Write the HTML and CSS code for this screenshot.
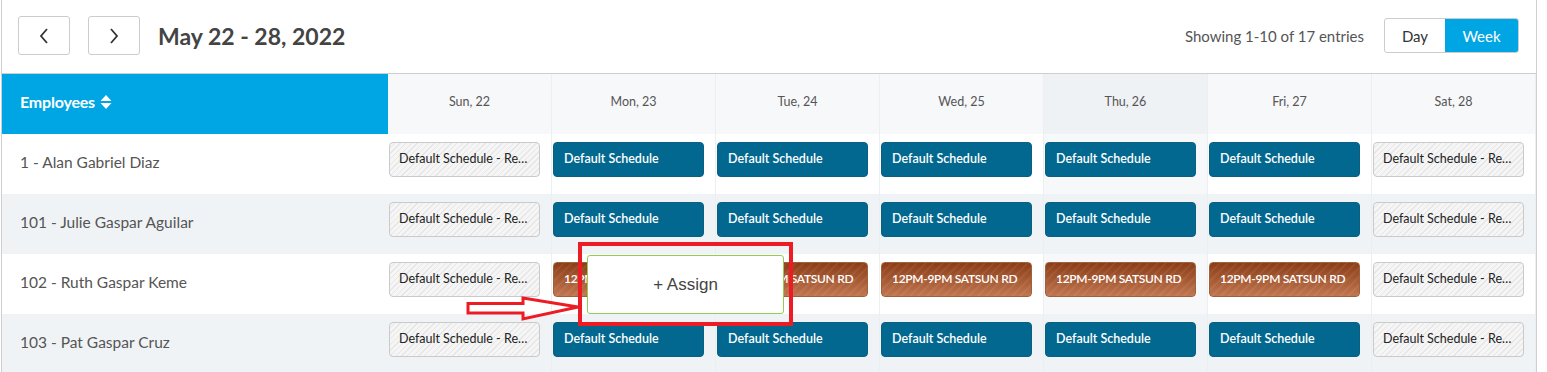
FILE: index.html
```html
<!DOCTYPE html>
<html lang="en">
<head>
  <meta charset="UTF-8" />
  <title>Weekly Schedule</title>
  <link rel="stylesheet" href="styles.css">
</head>
<body>
  <div class="schedule">
    <div class="toolbar">
      <button class="nav-btn" aria-label="Previous">
        <svg width="10" height="16" viewBox="0 0 10 16"><path d="M8 1 L2 8 L8 15" fill="none" stroke="#333" stroke-width="1.8"/></svg>
      </button>
      <button class="nav-btn" aria-label="Next">
        <svg width="10" height="16" viewBox="0 0 10 16"><path d="M2 1 L8 8 L2 15" fill="none" stroke="#333" stroke-width="1.8"/></svg>
      </button>
      <h1 class="range">May 22 - 28, 2022</h1>
      <div class="entries">Showing 1-10 of 17 entries</div>
      <div class="toggle">
        <span class="toggle-opt">Day</span>
        <span class="toggle-opt active">Week</span>
      </div>
    </div>

    <div class="grid">
      <div class="head emp-head">Employees
        <svg width="12" height="16" viewBox="0 0 12 16"><path d="M6 1 L11.5 7 H0.5 Z M6 15 L11.5 9 H0.5 Z" fill="#fff"/></svg>
      </div>
      <div class="head">Sun, 22</div>
      <div class="head">Mon, 23</div>
      <div class="head">Tue, 24</div>
      <div class="head">Wed, 25</div>
      <div class="head today">Thu, 26</div>
      <div class="head">Fri, 27</div>
      <div class="head">Sat, 28</div>

      <div class="name">1 - Alan Gabriel Diaz</div>
      <div class="cell"><div class="chip off">Default Schedule - Rest Day</div></div>
      <div class="cell"><div class="chip blue">Default Schedule</div></div>
      <div class="cell"><div class="chip blue">Default Schedule</div></div>
      <div class="cell"><div class="chip blue">Default Schedule</div></div>
      <div class="cell today"><div class="chip blue">Default Schedule</div></div>
      <div class="cell"><div class="chip blue">Default Schedule</div></div>
      <div class="cell"><div class="chip off">Default Schedule - Rest Day</div></div>

      <div class="name alt">101 - Julie Gaspar Aguilar</div>
      <div class="cell alt"><div class="chip off">Default Schedule - Rest Day</div></div>
      <div class="cell alt"><div class="chip blue">Default Schedule</div></div>
      <div class="cell alt"><div class="chip blue">Default Schedule</div></div>
      <div class="cell alt"><div class="chip blue">Default Schedule</div></div>
      <div class="cell alt today"><div class="chip blue">Default Schedule</div></div>
      <div class="cell alt"><div class="chip blue">Default Schedule</div></div>
      <div class="cell alt"><div class="chip off">Default Schedule - Rest Day</div></div>

      <div class="name">102 - Ruth Gaspar Keme</div>
      <div class="cell"><div class="chip off">Default Schedule - Rest Day</div></div>
      <div class="cell"><div class="chip brown">12PM-9PM SATSUN RD</div></div>
      <div class="cell"><div class="chip brown">12PM-9PM SATSUN RD</div></div>
      <div class="cell"><div class="chip brown">12PM-9PM SATSUN RD</div></div>
      <div class="cell today"><div class="chip brown">12PM-9PM SATSUN RD</div></div>
      <div class="cell"><div class="chip brown">12PM-9PM SATSUN RD</div></div>
      <div class="cell"><div class="chip off">Default Schedule - Rest Day</div></div>

      <div class="name alt">103 - Pat Gaspar Cruz</div>
      <div class="cell alt"><div class="chip off">Default Schedule - Rest Day</div></div>
      <div class="cell alt"><div class="chip blue">Default Schedule</div></div>
      <div class="cell alt"><div class="chip blue">Default Schedule</div></div>
      <div class="cell alt"><div class="chip blue">Default Schedule</div></div>
      <div class="cell alt today"><div class="chip blue">Default Schedule</div></div>
      <div class="cell alt"><div class="chip blue">Default Schedule</div></div>
      <div class="cell alt"><div class="chip off">Default Schedule - Rest Day</div></div>
    </div>
  </div>

  <!-- annotation over the grid -->
  <div class="assign">+ Assign</div>
  <div class="highlight"></div>
  <svg class="arrow" width="116" height="26" viewBox="0 0 116 26">
    <path d="M2 7.5 H57 V2 L112 11 L57 23 V17 H2 Z" fill="none" stroke="#ed1c24" stroke-width="3" stroke-linejoin="miter"/>
  </svg>
</body>
</html>
```

FILE: styles.css
```css
body {
  margin: 0;
  width: 1547px;
  height: 372px;
  overflow: hidden;
  position: relative;
  background: #fff;
  font-family: Lato, 'Open Sans', sans-serif;
  color: #555;
}

.schedule {
  margin-left: 1px;
  width: 1534px;
  border-left: 1px solid #cfcfcf;
  border-right: 1px solid #cfcfcf;
}

.toolbar {
  display: flex;
  align-items: center;
  padding: 0 17px 2px 16px;
  border-bottom: 1px solid #cfcfcf;
  box-sizing: border-box;
  height: 74px;
}

.nav-btn {
  width: 52px;
  height: 39px;
  margin-right: 18px;
  background: #fff;
  border: 1px solid #ccc;
  border-radius: 3px;
  display: flex;
  align-items: center;
  justify-content: center;
  padding: 0;
}

.range {
  margin: 0;
  font-size: 23px;
  font-weight: 700;
  color: #444;
  flex: 1;
}

.entries {
  font-size: 15px;
  color: #555;
  margin-right: 20px;
}

.toggle {
  display: flex;
  border: 1px solid #ccc;
  border-radius: 3px;
  height: 33px;
  overflow: hidden;
}

.toggle-opt {
  display: flex;
  align-items: center;
  justify-content: center;
  width: 60px;
  font-size: 15px;
  color: #333;
}

.toggle-opt.active {
  width: 73px;
  background: #00a6e3;
  color: #fff;
}

.grid {
  display: grid;
  grid-template-columns: 386px repeat(7, minmax(0, 1fr));
  grid-auto-rows: 60px;
}

.head {
  background: #f7f8fa;
  border-right: 1px solid #eceff2;
  display: flex;
  align-items: center;
  justify-content: center;
  padding-bottom: 5px;
  box-sizing: border-box;
  font-size: 12.5px;
  color: #555;
}

.head.today {
  background: #eff2f5;
}

.emp-head {
  background: #00a6e3;
  color: #fff;
  font-size: 16px;
  font-weight: 700;
  letter-spacing: -0.2px;
  justify-content: flex-start;
  padding-left: 18px;
  gap: 5px;
  border-right: none;
}

.name {
  display: flex;
  align-items: center;
  padding: 0 0 4px 18px;
  font-size: 15.5px;
  color: #555;
}

.cell {
  min-width: 0;
  border-right: 1px solid #eceff2;
  padding: 8px 11px 0 1px;
}

.alt {
  background: #f0f3f6;
}

.cell.today {
  background: #f6f8fa;
}

.cell.alt.today {
  background: #f0f3f6;
}

.chip {
  height: 35px;
  box-sizing: border-box;
  border-radius: 4px;
  padding: 0 10px;
  font-size: 12.5px;
  line-height: 32px;
  white-space: nowrap;
  overflow: hidden;
  text-overflow: ellipsis;
}

.chip.blue {
  background: #03688f;
  color: #fff;
  font-weight: 600;
  border: 1px solid #0b5f80;
}

.chip.brown {
  color: #fff;
  font-weight: 600;
  font-size: 12px;
  letter-spacing: -0.3px;
  border: 1px solid #a0603c;
  background:
    repeating-linear-gradient(135deg, rgba(255, 255, 255, 0.06) 0 2px, transparent 2px 6px),
    linear-gradient(#8b3d17, #c07650);
}

.chip.off {
  color: #222;
  padding: 0 9px;
  border: 1px solid #cacaca;
  background: repeating-linear-gradient(135deg, #f5f5f5 0 3px, #e6e6e6 3px 4px);
}

.assign {
  position: absolute;
  left: 587px;
  top: 255px;
  width: 197px;
  height: 59px;
  box-sizing: border-box;
  background: #fff;
  border: 1px solid #8fce4e;
  border-radius: 3px;
  display: flex;
  align-items: center;
  justify-content: center;
  font-family: 'Liberation Sans', Arial, sans-serif;
  font-size: 17px;
  color: #444;
}

.highlight {
  position: absolute;
  left: 578px;
  top: 242px;
  width: 215px;
  height: 84px;
  box-sizing: border-box;
  border: 4px solid #ed1c24;
}

.arrow {
  position: absolute;
  left: 466px;
  top: 296px;
}
```
